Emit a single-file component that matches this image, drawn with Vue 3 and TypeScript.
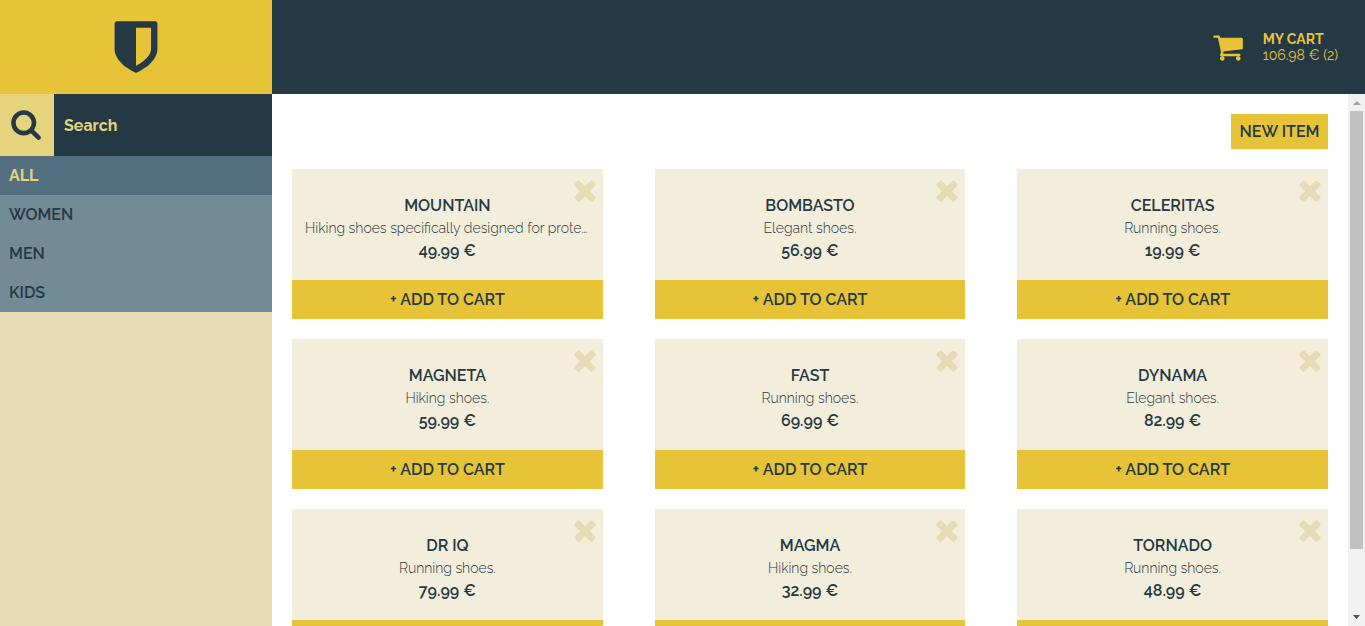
<script setup lang="ts">
import { ref } from 'vue'

interface Product {
  name: string
  description: string
  price: string
}

const categories: string[] = ['ALL', 'WOMEN', 'MEN', 'KIDS']
const selected = ref('ALL')
const query = ref('')

const products = ref<Product[]>([
  { name: 'MOUNTAIN', description: 'Hiking shoes specifically designed for protection on rough ground.', price: '49.99' },
  { name: 'BOMBASTO', description: 'Elegant shoes.', price: '56.99' },
  { name: 'CELERITAS', description: 'Running shoes.', price: '19.99' },
  { name: 'MAGNETA', description: 'Hiking shoes.', price: '59.99' },
  { name: 'FAST', description: 'Running shoes.', price: '69.99' },
  { name: 'DYNAMA', description: 'Elegant shoes.', price: '82.99' },
  { name: 'DR IQ', description: 'Running shoes.', price: '79.99' },
  { name: 'MAGMA', description: 'Hiking shoes.', price: '32.99' },
  { name: 'TORNADO', description: 'Running shoes.', price: '48.99' },
])
</script>

<template>
  <div class="shop">
    <aside class="sidebar">
      <a class="logo" href="#" aria-label="Home">
        <svg viewBox="0 0 1792 1792" aria-hidden="true">
          <path d="M1344 960v-640h-448v1137q119-63 213-137 235-184 235-360zm192-768v768q0 86-33.5 170.5t-83 150-118 127.5-126.5 103-121 77.5-89.5 49.5-42.5 20q-12 6-26 6t-26-6q-16-7-42.5-20t-89.5-49.5-121-77.5-126.5-103-118-127.5-83-150-33.5-170.5v-768q0-26 19-45t45-19h1152q26 0 45 19t19 45z" />
        </svg>
      </a>
      <form class="search" @submit.prevent>
        <label class="search-icon" for="search" aria-label="Search">
          <svg viewBox="0 0 1792 1792" aria-hidden="true">
            <path d="M1216 832q0-185-131.5-316.5t-316.5-131.5-316.5 131.5-131.5 316.5 131.5 316.5 316.5 131.5 316.5-131.5 131.5-316.5zm512 832q0 52-38 90t-90 38q-54 0-90-38l-343-342q-179 124-399 124-143 0-273.5-55.5t-225-150-150-225-55.5-273.5 55.5-273.5 150-225 225-150 273.5-55.5 273.5 55.5 225 150 150 225 55.5 273.5q0 220-124 399l343 343q37 37 37 90z" />
          </svg>
        </label>
        <input id="search" v-model="query" type="text" placeholder="Search" />
      </form>
      <nav class="categories">
        <a
          v-for="category in categories"
          :key="category"
          href="#"
          :class="{ active: category === selected }"
          @click.prevent="selected = category"
        >{{ category }}</a>
      </nav>
    </aside>

    <div class="main">
      <header class="topbar">
        <a class="cart" href="#">
          <svg viewBox="0 0 1792 1792" aria-hidden="true">
            <path d="M704 1536q0 52-38 90t-90 38-90-38-38-90 38-90 90-38 90 38 38 90zm896 0q0 52-38 90t-90 38-90-38-38-90 38-90 90-38 90 38 38 90zm128-1088v512q0 24-16.500 42.500t-40.500 21.500l-1044 122q13 60 13 70 0 16-24 64h920q26 0 45 19t19 45-19 45-45 19h-1024q-26 0-45-19t-19-45q0-11 8-31.500t16-36 21.500-40 15.500-29.500l-177-823h-204q-26 0-45-19t-19-45 19-45 45-19h256q16 0 28.500 6.500t19.500 15.500 13 24.500 8 26 5.500 29.500 4.500 26h1201q26 0 45 19t19 45z" />
          </svg>
          <span class="cart-text">
            <strong>MY CART</strong>
            <span>106.98 € (2)</span>
          </span>
        </a>
      </header>

      <div class="viewport">
        <main class="content">
          <div class="actions">
            <button type="button" class="new-item">NEW ITEM</button>
          </div>
          <section class="products">
            <article v-for="product in products" :key="product.name" class="card">
              <div class="info">
                <h2>{{ product.name }}</h2>
                <p class="description">{{ product.description }}</p>
                <p class="price">{{ product.price }} €</p>
              </div>
              <button type="button" class="remove" :aria-label="'Remove ' + product.name">
                <svg viewBox="0 0 1792 1792" aria-hidden="true">
                  <path d="M1490 1322q0 40-28 68l-136 136q-28 28-68 28t-68-28l-294-294-294 294q-28 28-68 28t-68-28l-136-136q-28-28-28-68t28-68l294-294-294-294q-28-28-28-68t28-68l136-136q28-28 68-28t68 28l294 294 294-294q28-28 68-28t68 28l136 136q28 28 28 68t-28 68l-294 294 294 294q28 28 28 68z" />
                </svg>
              </button>
              <button type="button" class="add">+ ADD TO CART</button>
            </article>
          </section>
        </main>
        <div class="scrollbar" aria-hidden="true">
          <svg class="arrow up" viewBox="0 0 17 17"><path d="M5 11h8L9 7z" /></svg>
          <div class="track"><div class="thumb"></div></div>
          <svg class="arrow down" viewBox="0 0 17 17"><path d="M5 6h7L8.500 10z" /></svg>
        </div>
      </div>
    </div>
  </div>
</template>

<style>
body {
  margin: 0;
}
</style>

<style scoped>
.shop {
  display: flex;
  height: 100vh;
  overflow: hidden;
  color: #243944;
  background: #fff;
  font-family: Raleway, Lato, sans-serif;
  font-size: 16px;
  line-height: 23px;
}

.shop * {
  box-sizing: border-box;
}

svg {
  display: block;
  fill: currentColor;
}

a {
  color: inherit;
  text-decoration: none;
}

button {
  border: 0;
  padding: 0;
  color: inherit;
  font: inherit;
  cursor: pointer;
}

.sidebar {
  flex: 0 0 272px;
  display: flex;
  flex-direction: column;
  background: #e5dcb5;
}

.logo {
  display: flex;
  align-items: center;
  justify-content: center;
  height: 94px;
  background: #e7c437;
}

.logo svg {
  width: 60px;
  height: 60px;
}

.search {
  display: flex;
  height: 62px;
  background: #243944;
}

.search-icon {
  display: flex;
  align-items: center;
  justify-content: center;
  width: 54px;
  padding: 0 2px 2px 0;
  background: #e5d37e;
}

.search-icon svg {
  width: 32px;
  height: 32px;
}

.search input {
  flex: 1;
  min-width: 0;
  padding: 0 10px;
  border: 0;
  outline: 0;
  background: transparent;
  color: #e5d37e;
  font: inherit;
  font-weight: 700;
}

.search input::placeholder {
  color: #e5d37e;
  opacity: 1;
}

.categories {
  display: flex;
  flex-direction: column;
  background: #728b97;
  font-weight: 600;
}

.categories a {
  padding: 8px 9px;
}

.categories .active {
  background: #536f80;
  color: #e5d37e;
  font-weight: 700;
}

.main {
  flex: 1;
  min-width: 0;
  display: flex;
  flex-direction: column;
}

.topbar {
  display: flex;
  align-items: center;
  justify-content: flex-end;
  height: 94px;
  padding: 0 27px;
  background: #243944;
}

.cart {
  display: flex;
  align-items: center;
  gap: 19px;
  color: #e7c437;
  font-size: 14px;
  line-height: 16px;
}

.cart svg {
  width: 32px;
  height: 32px;
}

.cart-text {
  display: flex;
  flex-direction: column;
}

.viewport {
  flex: 1;
  min-height: 0;
  display: flex;
}

.content {
  flex: 1;
  min-width: 0;
  padding: 20px;
  overflow-y: auto;
  scrollbar-width: none;
}

.actions {
  display: flex;
  justify-content: flex-end;
  margin-bottom: 20px;
}

.new-item {
  min-width: 97px;
  height: 35px;
  padding: 0 8px;
  background: #e7c437;
  font-weight: 600;
}

.products {
  display: grid;
  grid-template-columns: repeat(3, 30%);
  justify-content: space-between;
  row-gap: 20px;
}

.card {
  position: relative;
  background: #f3eddb;
  text-align: center;
}

.info {
  padding: 25px 13px 18px;
}

.info h2,
.info p {
  margin: 0;
  font-size: 16px;
  font-weight: 600;
}

.info .description {
  overflow: hidden;
  font-size: 14px;
  font-weight: 300;
  line-height: 22px;
  text-overflow: ellipsis;
  white-space: nowrap;
}

.remove {
  position: absolute;
  top: 5px;
  right: 2px;
  background: transparent;
  color: #e5dcb5;
}

.remove svg {
  width: 32px;
  height: 32px;
}

.add {
  display: block;
  width: 100%;
  height: 39px;
  background: #e7c437;
  font-weight: 600;
}

.scrollbar {
  display: flex;
  flex-direction: column;
  width: 17px;
  background: #f1f1f1;
}

.arrow {
  width: 17px;
  height: 17px;
}

.up {
  color: #a3a3a3;
}

.down {
  color: #505050;
}

.track {
  flex: 1;
  padding: 0 2px;
}

.thumb {
  height: 88%;
  background: #c1c1c1;
}
</style>
